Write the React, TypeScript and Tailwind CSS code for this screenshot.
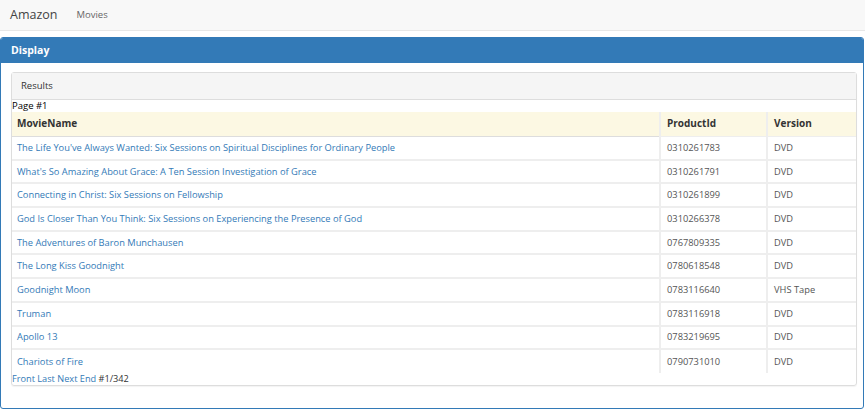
const movies = [
  ["The Life You've Always Wanted: Six Sessions on Spiritual Disciplines for Ordinary People", "0310261783", "DVD"],
  ["What's So Amazing About Grace: A Ten Session Investigation of Grace", "0310261791", "DVD"],
  ["Connecting in Christ: Six Sessions on Fellowship", "0310261899", "DVD"],
  ["God Is Closer Than You Think: Six Sessions on Experiencing the Presence of God", "0310266378", "DVD"],
  ["The Adventures of Baron Munchausen", "0767809335", "DVD"],
  ["The Long Kiss Goodnight", "0780618548", "DVD"],
  ["Goodnight Moon", "0783116640", "VHS Tape"],
  ["Truman", "0783116918", "DVD"],
  ["Apollo 13", "0783219695", "DVD"],
  ["Chariots of Fire", "0790731010", "DVD"],
]

export default function App() {
  return (
    <div className="w-[865px] h-[414px] bg-white text-[#333] font-['Open_Sans',sans-serif] text-[9.3px] overflow-hidden">
      <nav className="h-[31px] bg-[#f8f8f8] border-b border-[#e7e7e7] flex items-center px-[10px] gap-[19px]">
        <span className="text-[12.5px] text-[#444]">Amazon</span>
        <span className="text-[9.5px] text-[#666]">Movies</span>
      </nav>

      <div className="mt-[6px] mr-[1px] border border-[#337ab7] rounded-[3px] overflow-hidden">
        <div className="h-[25px] bg-[#337ab7] px-[10px] flex items-center text-white font-bold text-[10.5px]">
          Display
        </div>
        <div className="pt-[9px] pl-[10px] pr-[6px] pb-[22px]">
          <div className="border border-[#ddd] rounded-[3px] shadow-[0_1px_1px_rgba(0,0,0,0.05)]">
            <div className="h-[27px] bg-[#f5f5f5] border-b border-[#ddd] px-[9px] flex items-center text-[9.5px]">
              Results
            </div>
            <div className="text-[9.5px] text-black leading-[12px]">Page #1</div>
            <table className="w-full border-collapse table-fixed">
              <colgroup>
                <col />
                <col className="w-[107px]" />
                <col className="w-[89px]" />
              </colgroup>
              <thead>
                <tr className="bg-[#fcf8e3] h-[24px] text-[10px]">
                  <th className="text-left font-bold px-[5px] border-b border-[#ddd]">MovieName</th>
                  <th className="text-left font-bold px-[6px] border-l-2 border-b border-[#eee]">ProductId</th>
                  <th className="text-left font-bold px-[6px] border-l-2 border-b border-[#eee]">Version</th>
                </tr>
              </thead>
              <tbody>
                {movies.map(([name, id, version], i) => (
                  <tr key={id} className={`h-[23.7px] ${i < movies.length - 1 ? "border-b-2 border-[#eee]" : ""}`}>
                    <td className="px-[5px] text-[#337ab7] whitespace-nowrap">{name}</td>
                    <td className="px-[6px] text-[#555] border-l-2 border-[#eee]">{id}</td>
                    <td className="px-[6px] text-[#555] border-l-2 border-[#eee]">{version}</td>
                  </tr>
                ))}
              </tbody>
            </table>
            <div className="text-[9.2px] leading-[12px]">
              <span className="text-[#337ab7]">Front Last Next End</span> #1/342
            </div>
          </div>
        </div>
      </div>
    </div>
  )
}
